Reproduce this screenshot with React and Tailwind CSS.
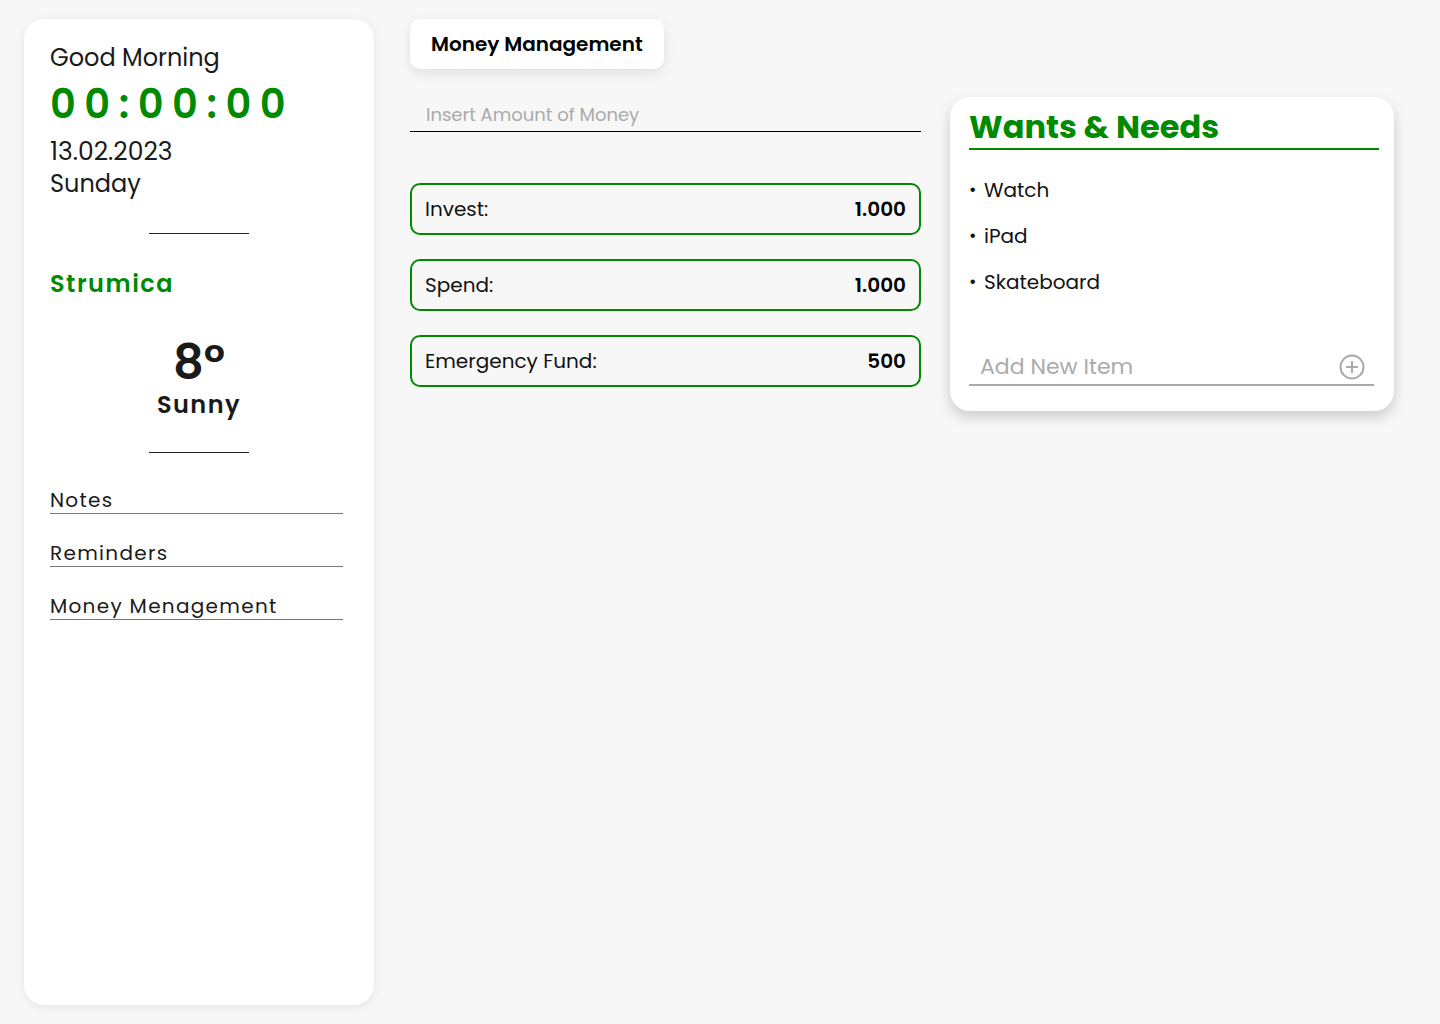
import React from 'react';

const font = "font-['Poppins','Inter',sans-serif]";

function NavLink({ label }) {
    return (
        <div className="border-b border-[#777] pb-[1px] text-[20px] leading-[24px] tracking-[1.3px] text-[#1a1a1a]">
            {label}
        </div>
    );
}

function MoneyRow({ label, value }) {
    return (
        <div className="flex items-center justify-between h-[52px] px-[13px] border-2 border-[#008a00] rounded-[10px] text-[20px]">
            <span className="text-[#111]">{label}</span>
            <span className="font-semibold text-black">{value}</span>
        </div>
    );
}

export default function App() {
    return (
        <div className={`min-h-screen bg-[#f7f7f7] ${font} text-[#1a1a1a] flex items-start pl-[24px] pt-[19px]`}>
            {/* Sidebar */}
            <aside className="w-[350px] h-[986px] bg-white rounded-[20px] shadow-[0_2px_10px_rgba(0,0,0,0.08)] px-[26px] pt-[24px] flex flex-col">
                <div className="text-[24px] leading-[30px]">Good Morning</div>
                <div className="text-[40px] leading-[48px] font-semibold text-[#008a00] tracking-[8.5px] mt-[7px]">00:00:00</div>
                <div className="text-[25px] leading-[30px] mt-[9px]">13.02.2023</div>
                <div className="text-[24px] leading-[30px] mt-[2px]">Sunday</div>
                <div className="w-[100px] h-px bg-[#222] self-center mt-[34px]" />
                <div className="text-[24px] leading-[30px] font-semibold text-[#008a00] tracking-[1.5px] mt-[35px]">Strumica</div>
                <div className="flex flex-col items-center mt-[40px]">
                    <div className="text-[48px] leading-[48px] font-semibold">8°</div>
                    <div className="text-[24px] leading-[30px] font-semibold tracking-[1.5px] mt-[3px]">Sunny</div>
                </div>
                <div className="w-[100px] h-px bg-[#222] self-center mt-[32px]" />
                <div className="flex flex-col gap-[27px] mt-[35px] mr-[5px]">
                    <NavLink label="Notes" />
                    <NavLink label="Reminders" />
                    <NavLink label="Money Menagement" />
                </div>
            </aside>

            {/* Middle */}
            <main className="ml-[36px] w-[511px] flex flex-col">
                <div className="self-start h-[50px] px-[21px] flex items-center bg-white rounded-[10px] shadow-[0_4px_12px_rgba(0,0,0,0.1)] text-[20px] font-semibold text-black">
                    Money Management
                </div>
                <input
                    placeholder="Insert Amount of Money"
                    className="mt-[32px] w-full bg-transparent border-b border-black px-[16px] pb-[2px] text-[18px] leading-[28px] outline-none placeholder:text-[#aaa]"
                />
                <div className="flex flex-col gap-[24px] mt-[51px]">
                    <MoneyRow label="Invest:" value="1.000" />
                    <MoneyRow label="Spend:" value="1.000" />
                    <MoneyRow label="Emergency Fund:" value="500" />
                </div>
            </main>

            {/* Wants & Needs */}
            <section className="ml-[29px] mt-[78px] w-[444px] h-[314px] bg-white rounded-[20px] shadow-[0_6px_14px_rgba(0,0,0,0.18)] pl-[19px] pr-[15px] pt-[12px] flex flex-col">
                <div className="text-[32px] leading-[36px] font-bold text-[#008a00] border-b-2 border-[#008a00] pb-[3px]">
                    Wants &amp; Needs
                </div>
                <ul className="mt-[26px] flex flex-col gap-[18px] text-[20px] leading-[28px] text-[#111]">
                    {['Watch', 'iPad', 'Skateboard'].map(item => (
                        <li key={item} className="flex items-center">
                            <span className="w-[15px] text-[18px] leading-[28px]">•</span>
                            {item}
                        </li>
                    ))}
                </ul>
                <div className="mt-[56px] mr-[5px] flex items-center border-b-2 border-[#aaa] pl-[11px] pr-[9px] pb-[2px]">
                    <input
                        placeholder="Add New Item"
                        className="flex-1 min-w-0 bg-transparent text-[22px] leading-[30px] outline-none placeholder:text-[#aaa]"
                    />
                    <svg className="shrink-0" width="26" height="26" viewBox="0 0 26 26" fill="none" stroke="#aaa" strokeWidth="2">
                        <circle cx="13" cy="13" r="11.5" />
                        <path d="M13 7v12M7 13h12" />
                    </svg>
                </div>
            </section>
        </div>
    );
}
